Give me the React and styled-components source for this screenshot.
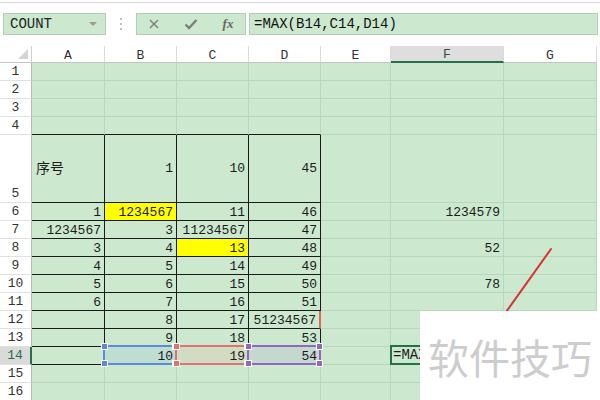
import React from "react";
import styled, { createGlobalStyle } from "styled-components";

const GRID = "#b9d6bc";
const BLACK = "#1a1a1a";
const SHEET_GREEN = "#cce8cf";
const EXCEL_GREEN = "#217346";

const GlobalStyle = createGlobalStyle`
  body {
    margin: 0;
    background: #fff;
  }
`;

const Page = styled.div`
  position: relative;
  width: 600px;
  height: 400px;
  overflow: hidden;
  background: #fff;
  font-family: "Liberation Mono", "Noto Sans CJK SC", monospace;
  color: #1c1c1c;
`;

const TopRule = styled.div`
  height: 2px;
  border-bottom: 1px solid #d8d8d8;
`;

const Toolbar = styled.div`
  display: flex;
  align-items: center;
  height: 22px;
  margin-top: 10px;
  padding-left: 3px;
`;

const Box = styled.div`
  box-sizing: border-box;
  height: 22px;
  display: flex;
  align-items: center;
  background: ${SHEET_GREEN};
  border: 1px solid #b4cdb6;
`;

const NameBox = styled(Box)`
  width: 103px;
  justify-content: space-between;
  padding: 0 6px;
  font-size: 14px;
  color: #222;
`;

const DropArrow = styled.span`
  width: 0;
  height: 0;
  border-left: 4px solid transparent;
  border-right: 4px solid transparent;
  border-top: 4px solid #9a9a9a;
  margin-right: 2px;
`;

const Dots = styled.div`
  width: 30px;
  display: flex;
  flex-direction: column;
  align-items: center;
  gap: 3px;

  span {
    width: 2px;
    height: 2px;
    background: #c0c0c0;
  }
`;

const FuncBox = styled(Box)`
  width: 110px;
  justify-content: space-between;
  padding: 0 11px;
`;

const Fx = styled.span`
  font-family: "Liberation Serif", serif;
  font-style: italic;
  font-weight: bold;
  font-size: 13px;
  color: #666;
  width: 12px;
  text-align: center;
`;

const FormulaBox = styled(Box)`
  flex: 1;
  margin-left: 3px;
  margin-right: 2px;
  padding-left: 4px;
  font-size: 14px;
  color: #111;
`;

const Sheet = styled.div`
  margin-top: 11px;
  display: grid;
  grid-template-columns: 32px 73px 72px 72px 72px 70px 113px 93px;
  grid-template-rows: 17px repeat(4, 18px) 68px repeat(11, 18px);
  width: 597px;
`;

const Corner = styled.div`
  position: relative;
  box-sizing: border-box;
  background: #fff;
  border-right: 1px solid #d0d0d0;
  border-bottom: 1px solid #c4c4c4;

  &::after {
    content: "";
    position: absolute;
    right: 3px;
    bottom: 3px;
    border-style: solid;
    border-width: 0 0 10px 10px;
    border-color: transparent transparent #d4d4d4 transparent;
  }
`;

const ColHead = styled.div`
  box-sizing: border-box;
  display: flex;
  align-items: center;
  justify-content: center;
  padding-top: 2px;
  font-size: 13px;
  color: ${(p) => (p.$active ? "#2f4f3a" : "#333")};
  background: ${(p) => (p.$active ? "#dedede" : "#fff")};
  border-right: 1px solid #dadada;
  border-bottom: ${(p) =>
    p.$active ? `2px solid ${EXCEL_GREEN}` : "1px solid #c4c4c4"};
`;

const RowHead = styled.div`
  box-sizing: border-box;
  display: flex;
  align-items: flex-end;
  justify-content: center;
  line-height: 14px;
  padding-bottom: 1px;
  font-size: 13px;
  color: ${(p) => (p.$active ? EXCEL_GREEN : "#333")};
  background: ${(p) => (p.$active ? "#dadada" : "#fff")};
  border-right: ${(p) =>
    p.$active ? `2px solid ${EXCEL_GREEN}` : "1px solid #b8b8b8"};
  border-bottom: 1px solid #e0e0e0;
`;

const Cell = styled.div`
  position: relative;
  box-sizing: border-box;
  display: flex;
  align-items: ${(p) => (p.$middle ? "center" : "flex-end")};
  justify-content: ${(p) => (p.$left ? "flex-start" : "flex-end")};
  padding: 0 3px 0 4px;
  line-height: 14px;
  background: ${(p) => (p.$yellow ? "#ffff00" : SHEET_GREEN)};
  border-right: ${(p) => p.$rw || 1}px solid ${(p) => p.$right || GRID};
  border-bottom: 1px solid ${(p) => p.$bottom || GRID};
  font-size: ${(p) => (p.$cjk ? "14px" : "13px")};
  white-space: nowrap;
`;

const Range = styled.div`
  position: absolute;
  top: -2px;
  left: -2px;
  right: -1px;
  bottom: -1px;
  border: 2px solid ${(p) => p.$color};
  background: ${(p) => p.$fill};
  z-index: ${(p) => p.$z};
  pointer-events: none;
`;

const Handle = styled.span`
  position: absolute;
  width: 5px;
  height: 5px;
  background: ${(p) => p.$color};
  border: 1px solid #fff;
  ${(p) => (p.$top ? "top: -4px;" : "bottom: -4px;")}
  ${(p) => (p.$l ? "left: -4px;" : "right: -4px;")}
`;

const CellText = styled.span`
  position: relative;
  z-index: 5;
`;

const ActiveEdit = styled.div`
  position: absolute;
  top: -2px;
  left: -1px;
  width: 31px;
  height: 20px;
  box-sizing: border-box;
  overflow: hidden;
  display: flex;
  align-items: center;
  padding-left: 1px;
  border: 2px solid ${EXCEL_GREEN};
  border-right: none;
  background: ${SHEET_GREEN};
  font-size: 14px;
  z-index: 6;
  white-space: nowrap;
`;

const Annotation = styled.svg`
  position: absolute;
  left: 0;
  top: 0;
  z-index: 8;
  pointer-events: none;
`;

const Watermark = styled.div`
  position: absolute;
  left: 420px;
  top: 311px;
  width: 180px;
  height: 89px;
  background: #fff;
  display: flex;
  align-items: center;
  justify-content: center;
  font-family: "Noto Sans CJK SC", sans-serif;
  font-size: 41px;
  color: #cdcdcd;
  z-index: 9;
`;

const COLS = ["A", "B", "C", "D", "E", "F", "G"];

const DATA = {
  5: ["序号", "1", "10", "45"],
  6: ["1", "1234567", "11", "46", "", "1234579"],
  7: ["1234567", "3", "11234567", "47"],
  8: ["3", "4", "13", "48", "", "52"],
  9: ["4", "5", "14", "49"],
  10: ["5", "6", "15", "50", "", "78"],
  11: ["6", "7", "16", "51"],
  12: ["", "8", "17", "51234567"],
  13: ["", "9", "18", "53"],
  14: ["", "10", "19", "54"],
};

const YELLOW = { "6-1": true, "8-2": true };

const RANGES = {
  "14-1": { color: "#5b8bd8", fill: "rgba(110, 160, 235, 0.14)", z: 2 },
  "14-2": { color: "#e07272", fill: "rgba(245, 150, 120, 0.14)", z: 3 },
  "14-3": { color: "#9068c0", fill: "rgba(150, 110, 210, 0.12)", z: 4 },
};

function cellBorders(row, col) {
  const inTable = col <= 3;
  const b = {};
  if (inTable && row === 4) b.bottom = BLACK;
  if (inTable && row >= 5 && row <= 13) {
    b.right = BLACK;
    b.bottom = BLACK;
  }
  if (row === 14 && col === 0) {
    b.right = BLACK;
    b.bottom = BLACK;
  }
  if (row === 12 && col === 3) {
    b.right = "#e06a5a";
    b.rw = 2;
  }
  return b;
}

function SheetCell({ row, col }) {
  const values = DATA[row] || [];
  const value = values[col] || "";
  const key = `${row}-${col}`;
  const range = RANGES[key];
  const borders = cellBorders(row, col);

  return (
    <Cell
      $yellow={YELLOW[key]}
      $right={borders.right}
      $bottom={borders.bottom}
      $rw={borders.rw}
      $middle={row === 5}
      $left={value === "序号"}
      $cjk={value === "序号"}
    >
      {range && (
        <Range $color={range.color} $fill={range.fill} $z={range.z}>
          <Handle $color={range.color} $top $l />
          <Handle $color={range.color} $top />
          <Handle $color={range.color} $l />
          <Handle $color={range.color} />
        </Range>
      )}
      {row === 14 && col === 5 && <ActiveEdit>=MAX(B14,C14,D14)</ActiveEdit>}
      <CellText>{value}</CellText>
    </Cell>
  );
}

function Close() {
  return (
    <svg width="12" height="12" viewBox="0 0 12 12">
      <path d="M2 2 L10 10 M10 2 L2 10" stroke="#7d7d7d" strokeWidth="1.4" />
    </svg>
  );
}

function Check() {
  return (
    <svg width="14" height="12" viewBox="0 0 14 12">
      <path
        d="M1.5 6.5 L5 10 L12.5 2"
        stroke="#7d7d7d"
        strokeWidth="2.4"
        fill="none"
      />
    </svg>
  );
}

export default function App() {
  const rows = Array.from({ length: 16 }, (_, i) => i + 1);

  return (
    <Page>
      <GlobalStyle />
      <TopRule />
      <Toolbar>
        <NameBox>
          COUNT
          <DropArrow />
        </NameBox>
        <Dots>
          <span />
          <span />
          <span />
        </Dots>
        <FuncBox>
          <Close />
          <Check />
          <Fx>fx</Fx>
        </FuncBox>
        <FormulaBox>=MAX(B14,C14,D14)</FormulaBox>
      </Toolbar>

      <Sheet>
        <Corner />
        {COLS.map((c) => (
          <ColHead key={c} $active={c === "F"}>
            {c}
          </ColHead>
        ))}
        {rows.map((r) => (
          <React.Fragment key={r}>
            <RowHead $active={r === 14}>{r}</RowHead>
            {COLS.map((c, ci) => (
              <SheetCell key={c} row={r} col={ci} />
            ))}
          </React.Fragment>
        ))}
      </Sheet>

      <Annotation width="600" height="400">
        <line
          x1="551"
          y1="249"
          x2="496"
          y2="326"
          stroke="#d8332e"
          strokeWidth="2"
          strokeLinecap="round"
        />
      </Annotation>
      <Watermark>软件技巧</Watermark>
    </Page>
  );
}
